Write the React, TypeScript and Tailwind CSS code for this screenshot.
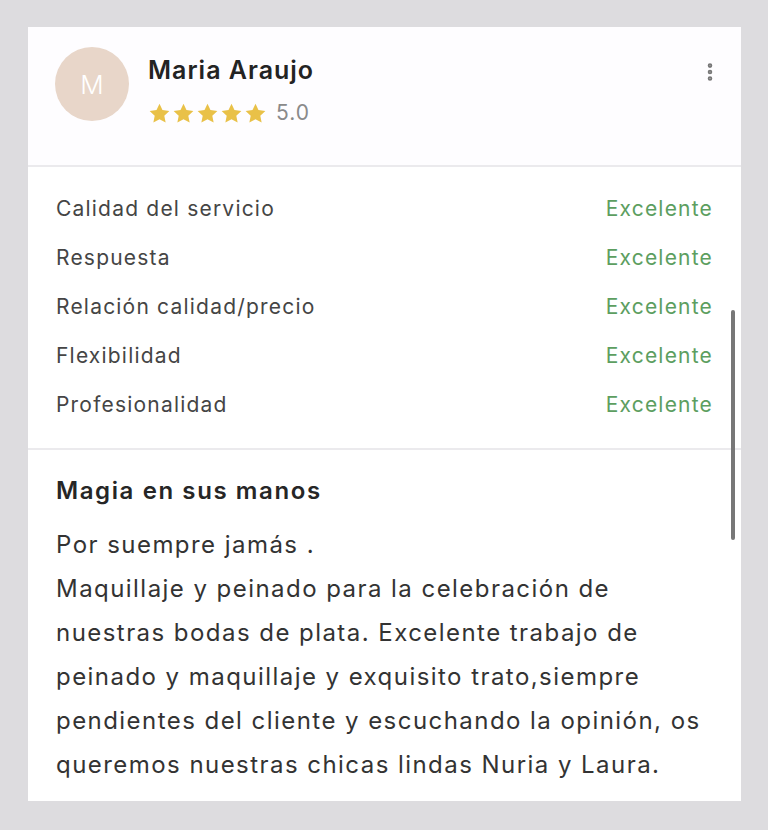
import { MoreVertical } from "lucide-react";

const ratings = [
  "Calidad del servicio",
  "Respuesta",
  "Relación calidad/precio",
  "Flexibilidad",
  "Profesionalidad",
];

const lines = [
  "Por suempre jamás .",
  "Maquillaje y peinado para la celebración de",
  "nuestras bodas de plata. Excelente trabajo de",
  "peinado y maquillaje y exquisito trato,siempre",
  "pendientes del cliente y escuchando la opinión, os",
  "queremos nuestras chicas lindas Nuria y Laura.",
];

function Star() {
  return (
    <svg viewBox="0 0 24 24" className="w-[23px] h-[23px]">
      <path
        d="M12 1.8l3.1 6.6 7.2.9-5.3 5 1.4 7.1L12 17.9l-6.4 3.5 1.4-7.1-5.3-5 7.2-.9z"
        fill="#e9c148"
      />
    </svg>
  );
}

const App = () => {
  return (
    <div className="min-h-screen bg-[#dddcdf] pt-[27px] pl-[28px] pr-[27px] pb-[30px] font-['Inter',sans-serif]">
      <div className="relative bg-white">
        {/* header */}
        <div className="flex items-start bg-[#fefdff] pl-[27px] pr-[20px] pt-[20px] pb-[40px]">
          <div className="w-[74px] h-[74px] rounded-full bg-[#e8d6c9] flex items-center justify-center text-white text-[26px] font-light">
            M
          </div>
          <div className="ml-[19px] pt-[8px]">
            <div className="text-[25px] leading-[30px] font-semibold text-[#232323] tracking-[1px]">Maria Araujo</div>
            <div className="flex items-center mt-[16px]">
              <div className="flex gap-[1px]">
                <Star />
                <Star />
                <Star />
                <Star />
                <Star />
              </div>
              <span className="ml-[9px] text-[21px] leading-[24px] text-[#8a8a8a] tracking-[1px]">5.0</span>
            </div>
          </div>
          <div className="ml-auto pt-[14px] text-[#777]">
            <MoreVertical size={22} strokeWidth={3} />
          </div>
        </div>
        <div className="h-[2px] bg-[#ebeaed]" />

        {/* ratings */}
        <div className="pl-[28px] pr-[28px] pt-[17px] pb-[19px] tracking-[1.2px]">
          {ratings.map((r) => (
            <div key={r} className="flex justify-between items-center h-[49px] text-[21px]">
              <span className="text-[#454545]">{r}</span>
              <span className="text-[#5c9e60]">Excelente</span>
            </div>
          ))}
        </div>
        <div className="h-[2px] bg-[#ebeaed]" />

        {/* review */}
        <div className="pl-[28px] pr-[20px] pt-[26px] pb-[14px]">
          <div className="text-[24px] font-semibold text-[#262626] leading-[30px] tracking-[1.6px]">Magia en sus manos</div>
          <div className="mt-[17px] text-[24px] leading-[44px] text-[#333] tracking-[1.45px] whitespace-nowrap">
            {lines.map((l) => (
              <div key={l}>{l}</div>
            ))}
          </div>
        </div>

        {/* scrollbar */}
        <div className="absolute right-[6px] top-[283px] w-[4px] h-[230px] rounded-full bg-[#777]" />
      </div>
    </div>
  );
};

export default App;
